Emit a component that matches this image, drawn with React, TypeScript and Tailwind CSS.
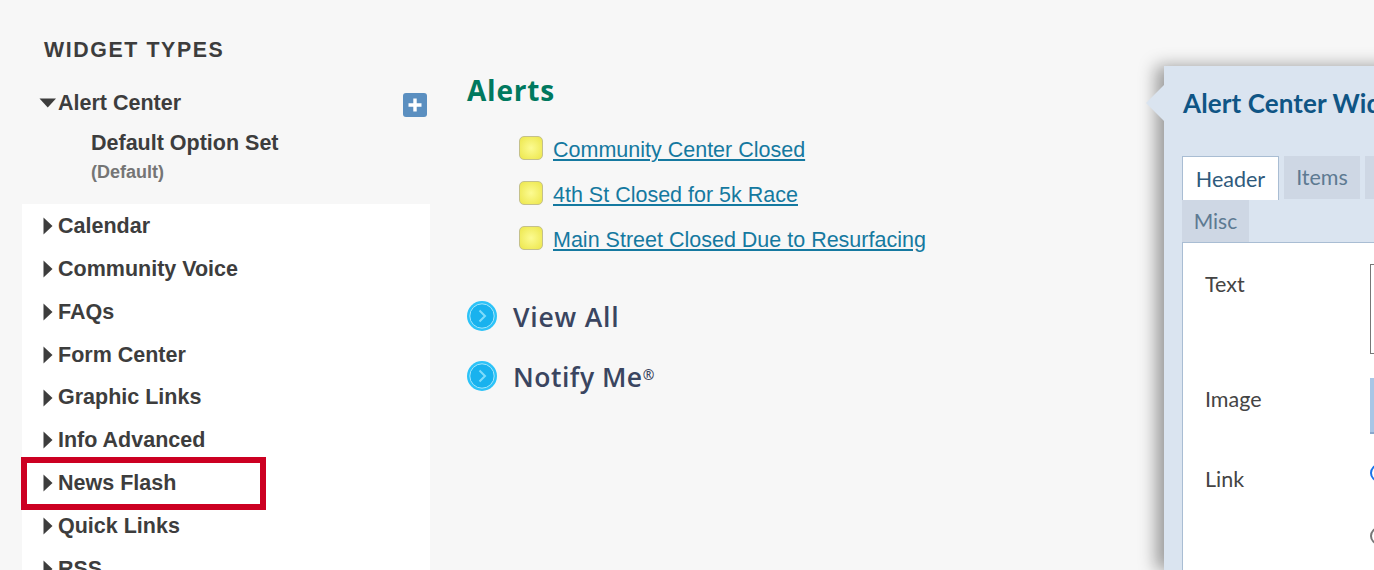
import React from 'react';

const widgets = ['Calendar', 'Community Voice', 'FAQs', 'Form Center', 'Graphic Links', 'Info Advanced', 'News Flash', 'Quick Links', 'RSS'];
const alerts = ['Community Center Closed', '4th St Closed for 5k Race', 'Main Street Closed Due to Resurfacing'];

const Arrow = () => (
  <svg width="10" height="18" viewBox="0 0 10 18" className="shrink-0">
    <path d="M0.5 0.5 L9.5 9 L0.5 17.5 Z" fill="#3d3d3d" />
  </svg>
);

const GoIcon = () => (
  <svg width="30" height="30" viewBox="0 0 30 30" className="shrink-0">
    <circle cx="15" cy="15" r="15" fill="#2cc3f8" />
    <circle cx="15" cy="15" r="12.2" fill="#18b2ee" stroke="#a5e6fb" strokeWidth="1" />
    <path d="M12.5 9.5 L18 15 L12.5 20.5" fill="none" stroke="#7fdcfa" strokeWidth="2" />
  </svg>
);

export default function App() {
  return (
    <div className="relative flex h-[570px] w-[1374px] overflow-hidden bg-[#f7f7f7] font-['Liberation_Sans',sans-serif]">
      {/* widget types column */}
      <div className="ml-[22px] w-[408px] shrink-0">
        <h2 className="mt-[38px] ml-[22px] text-[21.33px] leading-[24px] font-bold tracking-[1.6px] text-[#3d3d3d]">WIDGET TYPES</h2>
        <div className="mt-[26px] flex items-center pr-[3px] pl-[17px]">
          <svg width="18" height="10" viewBox="0 0 18 10" className="mr-px shrink-0">
            <path d="M0.5 0.5 H17 L8.75 9.5 Z" fill="#3d3d3d" />
          </svg>
          <span className="flex-1 text-[21.5px] leading-[30px] font-bold text-[#3d3d3d]">Alert Center</span>
          <span className="mt-[3px] flex h-6 w-6 items-center justify-center rounded-[3px] bg-[#5b8fc0]">
            <svg width="16" height="16" viewBox="0 0 16 16">
              <path d="M8 1.5 V14.5 M1.5 8 H14.5" stroke="#fff" strokeWidth="3.4" />
            </svg>
          </span>
        </div>
        <div className="mt-[12px] ml-[69px] text-[21.5px] leading-[26px] font-bold text-[#3d3d3d]">Default Option Set</div>
        <div className="mt-[4px] ml-[69px] text-[18px] leading-[24px] font-bold text-[#757575]">(Default)</div>
        <ul className="mt-[20px] bg-white pt-[1px]">
          {widgets.map((w) => (
            <li key={w} className="flex h-[42.8px] items-center gap-[5px] pl-[21px] text-[21.5px] font-bold text-[#3d3d3d]">
              <Arrow />
              {w}
            </li>
          ))}
        </ul>
      </div>

      {/* preview column */}
      <div className="ml-[37px] w-[697px] shrink-0">
        <h1 className="mt-[71px] font-['Open_Sans',sans-serif] text-[28px] leading-[38px] font-bold tracking-[0.8px] text-[#00795f]">Alerts</h1>
        <ul className="mt-[26px] ml-[52px] flex flex-col gap-[15px]">
          {alerts.map((a) => (
            <li key={a} className="flex h-[30px] items-center gap-[10px]">
              <span className="mb-[4px] h-[24px] w-[24px] rounded-[5px] border border-[#c4c08c] bg-[radial-gradient(circle,#fcfb92,#ece64a)]" />
              <a className="text-[21.5px] leading-[30px] text-[#1579a0] underline">{a}</a>
            </li>
          ))}
        </ul>
        <div className="mt-[46px] flex flex-col gap-[30px]">
          <div className="flex h-[30px] items-center gap-[16px]">
            <GoIcon />
            <span className="pt-[3px] font-['Open_Sans',sans-serif] text-[26.5px] font-semibold tracking-[0.8px] text-[#3a4560]">View All</span>
          </div>
          <div className="flex h-[30px] items-center gap-[16px]">
            <GoIcon />
            <span className="pt-[3px] font-['Open_Sans',sans-serif] text-[26.5px] font-semibold tracking-[0.5px] text-[#3a4560]">
              Notify Me<sup className="text-[14px]">®</sup>
            </span>
          </div>
        </div>
      </div>

      {/* settings panel, runs off the right edge */}
      <div className="relative mt-[66px] w-[300px] shrink-0 bg-[#dae4f0] pl-[18px] font-['Lato',sans-serif] shadow-[-8px_0_16px_rgba(0,0,0,0.38)]">
        <span className="absolute top-[19px] -left-[18px] h-0 w-0 border-y-[18px] border-r-[18px] border-y-transparent border-r-[#dae4f0]" />
        <h3 className="mt-[20px] ml-px text-[26px] leading-[34px] font-bold tracking-[0.1px] whitespace-nowrap text-[#0f5585]">Alert Center Wid</h3>
        <div className="mt-[36px] flex h-[44px] gap-[5px]">
          <span className="flex h-[44px] w-[97px] items-center justify-center border border-b-0 border-[#a9bdd3] bg-white pt-[2px] text-[21.5px] text-[#2f5a7c]">Header</span>
          <span className="flex h-[43px] w-[76px] items-center justify-center bg-[#ced7e4] text-[21.5px] text-[#5d7a92]">Items</span>
          <span className="h-[43px] w-[60px] bg-[#ced7e4]" />
        </div>
        <span className="flex h-[42px] w-[67px] items-center justify-center bg-[#ced7e4] text-[21px] text-[#5d7a92]">Misc</span>
        <div className="h-[400px] border-t border-l border-[#a9bdd3] bg-white pt-[21px] pl-[22px] text-[21.5px] text-[#444]">
          <div className="flex h-[115px]">
            <span className="w-[165px] leading-[40px]">Text</span>
            <span className="h-[90px] flex-1 border border-r-0 border-[#777]" />
          </div>
          <div className="flex h-[80px]">
            <span className="w-[165px] leading-[40px]">Image</span>
            <span className="-mt-px h-[56px] flex-1 border-b-2 border-[#8aa8cc] bg-[#a9c6e6]" />
          </div>
          <div className="flex h-[80px]">
            <span className="w-[165px] leading-[40px]">Link</span>
            <span className="mt-[5px] h-[18px] w-[18px] rounded-full border-2 border-[#1a73e8]" />
          </div>
          <div className="flex">
            <span className="w-[165px]" />
            <span className="-mt-[12px] h-[18px] w-[18px] rounded-full border-2 border-[#777]" />
          </div>
        </div>
      </div>

      {/* callout box over the list */}
      <div className="absolute top-[457px] left-[21px] h-[53px] w-[245px] border-[6px] border-[#cc0022]" />
    </div>
  );
}
